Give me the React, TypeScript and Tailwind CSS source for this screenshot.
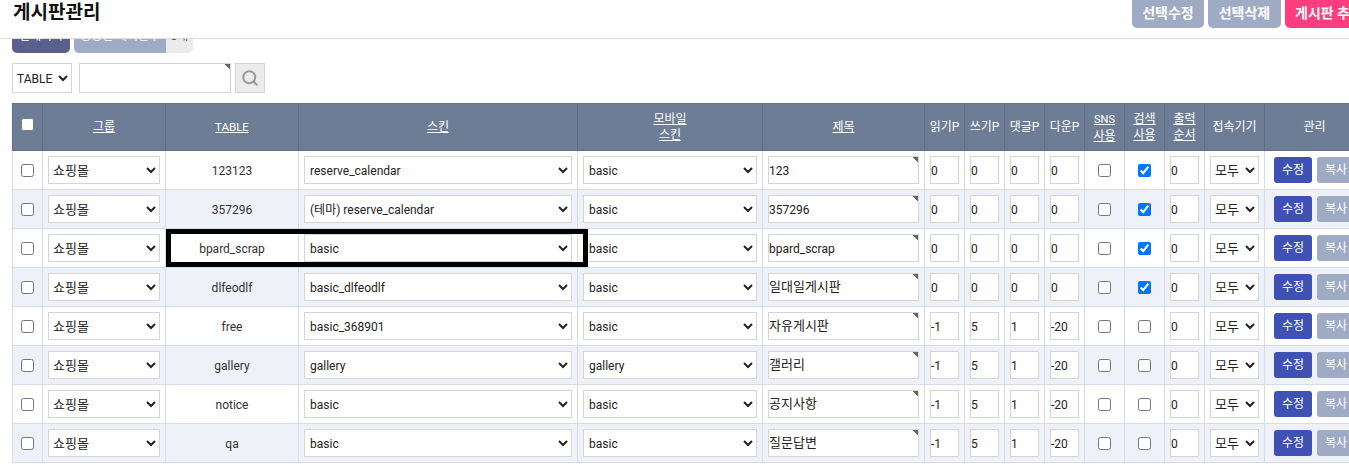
import { Search } from "lucide-react";

const rows = [
  { table: "123123", skin: "reserve_calendar", mobile: "basic", title: "123", p: ["0", "0", "0", "0"], search: true },
  { table: "357296", skin: "(테마) reserve_calendar", mobile: "basic", title: "357296", p: ["0", "0", "0", "0"], search: true },
  { table: "bpard_scrap", skin: "basic", mobile: "basic", title: "bpard_scrap", p: ["0", "0", "0", "0"], search: true },
  { table: "dlfeodlf", skin: "basic_dlfeodlf", mobile: "basic", title: "일대일게시판", p: ["0", "0", "0", "0"], search: true },
  { table: "free", skin: "basic_368901", mobile: "basic", title: "자유게시판", p: ["-1", "5", "1", "-20"], search: false },
  { table: "gallery", skin: "gallery", mobile: "gallery", title: "갤러리", p: ["-1", "5", "1", "-20"], search: false },
  { table: "notice", skin: "basic", mobile: "basic", title: "공지사항", p: ["-1", "5", "1", "-20"], search: false },
  { table: "qa", skin: "basic", mobile: "basic", title: "질문답변", p: ["-1", "5", "1", "-20"], search: false },
];

const widths = [30, 123, 133, 279, 185, 162, 40, 40, 40, 40, 40, 40, 40, 60, 100];
const th = "border border-[#5f6e88] font-normal text-white text-center text-[12px] leading-[16px] p-0";
const td = "border border-[#d5dbe8] px-[5px] py-0 text-center align-middle";
const sel = "w-full h-[28px] bg-white border border-[#d5d5d5] text-[12px] text-[#222] pl-[1px] pt-[2px] outline-none block";
const selKo = "w-full h-[28px] bg-white border border-[#d5d5d5] text-[13px] text-[#222] pl-0 pt-[1px] outline-none block";
const inp = "w-full h-[28px] bg-white border border-[#d5d5d5] text-[12px] text-[#222] px-0 pt-[2px] outline-none block";
const inpKo = "w-full h-[28px] bg-white border border-[#d5d5d5] text-[13px] text-[#222] px-0 pb-[3px] outline-none block";
const req = "bg-[linear-gradient(225deg,#66665a_4px,#ffffff_4px)]";
const hasKo = (s: string) => /^[가-힣]+$/.test(s);

export default function App() {
  return (
    <div className="w-[1349px] h-[471px] overflow-hidden bg-white text-[#333] text-[12px] font-['Roboto','Noto_Sans_CJK_KR',sans-serif]">
      <header className="h-[39px] border-b border-[#ddd] flex items-start justify-between pl-[13px]">
        <h1 className="text-[19px] font-bold leading-[26px] text-[#111]">게시판관리</h1>
        <div className="flex gap-[4px] w-[217px] shrink-0 overflow-hidden h-[28px]">
          <button className="w-[72px] shrink-0 h-[28px] pb-[2px] rounded-b-[5px] bg-[#9fabc4] text-white font-bold text-[14px]">선택수정</button>
          <button className="w-[73px] shrink-0 h-[28px] pb-[2px] rounded-b-[5px] bg-[#9fabc4] text-white font-bold text-[14px]">선택삭제</button>
          <button className="w-[80px] shrink-0 h-[28px] pb-[2px] rounded-bl-[5px] bg-[#ff3d7f] text-white font-bold text-[14px] text-left pl-[10px] whitespace-nowrap">게시판 추가</button>
        </div>
      </header>

      <div className="h-[14px] overflow-hidden flex items-end gap-[4px] pl-[12px]">
        <div className="w-[58px] h-[28px] shrink-0 rounded-[5px] bg-[#5a5f8c] text-white text-center leading-[23px]">전체목록</div>
        <div className="flex h-[28px] shrink-0 rounded-[5px] overflow-hidden">
          <div className="w-[92px] bg-[#9fabc4] text-white text-center leading-[23px]">생성된 게시판수</div>
          <div className="w-[27px] bg-[#ebebeb] text-[#555] text-center leading-[23px]">8개</div>
        </div>
      </div>

      <form className="flex items-stretch h-[30px] mt-[10px] ml-[12px]">
        <select className="w-[60px] h-[30px] bg-white border border-[#d5d5d5] text-[12px] text-[#222] pl-0 pt-[2px] outline-none">
          <option>TABLE</option>
        </select>
        <input className={`w-[152px] h-[30px] ml-[7px] border border-[#d5d5d5] outline-none ${req}`} />
        <button type="button" className="w-[30px] h-[30px] ml-[4px] bg-[#ebebeb] border border-[#d5d5d5] flex items-center justify-center text-[#999]">
          <Search size={18} strokeWidth={2.6} />
        </button>
      </form>

      <div className="relative mt-[10px] ml-[12px] w-[1352px]">
        <table className="table-fixed border-collapse w-[1352px]">
          <colgroup>
            {widths.map((w, i) => (
              <col key={i} style={{ width: w }} />
            ))}
          </colgroup>
          <thead>
            <tr className="h-[47px] bg-[#6e7d96]">
              <th className={th}><input type="checkbox" className="align-middle mb-[5px]" /></th>
              <th className={th}><u>그룹</u></th>
              <th className={th}><u className="text-[11.5px]">TABLE</u></th>
              <th className={th}><u>스킨</u></th>
              <th className={th}><u>모바일<br />스킨</u></th>
              <th className={th}><u>제목</u></th>
              <th className={th}>읽기P</th>
              <th className={th}>쓰기P</th>
              <th className={th}>댓글P</th>
              <th className={th}>다운P</th>
              <th className={th}><u><span className="text-[11px]">SNS</span><br />사용</u></th>
              <th className={th}><u>검색<br />사용</u></th>
              <th className={th}><u>출력<br />순서</u></th>
              <th className={th}>접속기기</th>
              <th className={th}>관리</th>
            </tr>
          </thead>
          <tbody>
            {rows.map((r, i) => (
              <tr key={r.table} className={`h-[39px] ${i % 2 ? "bg-[#eef1f8]" : "bg-white"}`}>
                <td className={td}><input type="checkbox" className="align-middle" /></td>
                <td className={td}>
                  <select className={selKo}><option>쇼핑몰</option></select>
                </td>
                <td className={`${td} pt-[2px]`}>{r.table}</td>
                <td className={td}>
                  <select className={sel}><option>{r.skin}</option></select>
                </td>
                <td className={td}>
                  <select className={sel}><option>{r.mobile}</option></select>
                </td>
                <td className={td}>
                  <input className={`${hasKo(r.title) ? inpKo : inp} ${req}`} defaultValue={r.title} />
                </td>
                {r.p.map((v, k) => (
                  <td key={k} className={td}>
                    <input className={inp} defaultValue={v} />
                  </td>
                ))}
                <td className={td}><input type="checkbox" className="align-middle" /></td>
                <td className={td}><input type="checkbox" defaultChecked={r.search} className="align-middle" /></td>
                <td className={td}>
                  <input className={inp} defaultValue="0" />
                </td>
                <td className={td}>
                  <select className={selKo}><option>모두</option></select>
                </td>
                <td className={td}>
                  <div className="flex justify-center gap-[5px]">
                    <button className="w-[38px] h-[26px] rounded-[3px] bg-[#3f51b5] text-white text-[12px]">수정</button>
                    <button className="w-[38px] h-[26px] rounded-[3px] bg-[#9fabc4] text-white text-[12px]">복사</button>
                  </div>
                </td>
              </tr>
            ))}
          </tbody>
        </table>
        <div className="absolute left-[154px] top-[126px] w-[422px] h-[38px] border-[5px] border-black pointer-events-none" />
      </div>
    </div>
  );
}
